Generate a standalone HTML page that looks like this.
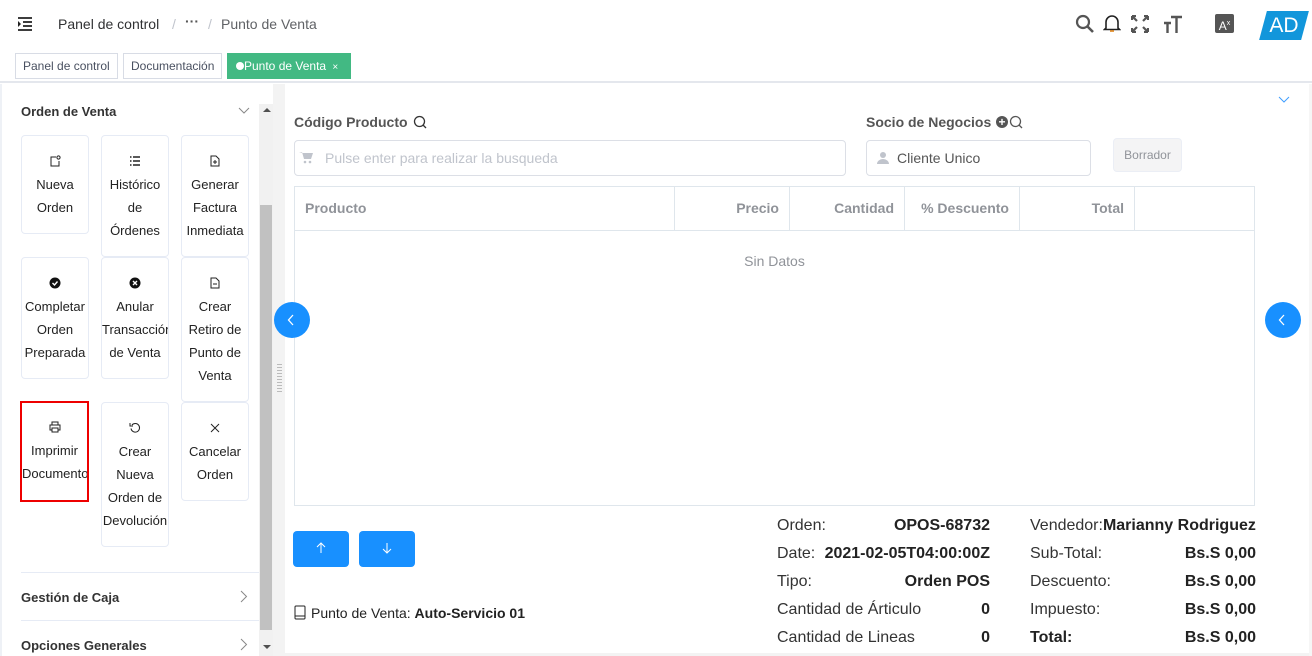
<!DOCTYPE html>
<html><head><meta charset="utf-8"><style>
*{box-sizing:border-box;margin:0;padding:0}
body{width:1312px;height:656px;overflow:hidden;background:#fff;font-family:"Liberation Sans",sans-serif;position:relative;color:#303133}
.a{position:absolute}
.hdr{left:0;top:0;width:1312px;height:48px;background:#fff;box-shadow:0 1px 4px rgba(0,21,41,.08)}
.tab{top:53px;height:26px;border:1px solid #d8dce5;font-size:12px;color:#495060;line-height:24px;padding:0 7px;background:#fff}
.card{border:1px solid #e6ebf5;border-radius:4px;text-align:center;font-size:13px;line-height:23px;color:#222;padding-top:19px;overflow:hidden;white-space:nowrap}
.card svg{display:block;margin:0 auto 6px}
.lbl{font-size:14px;font-weight:bold;color:#555}
.th{top:186px;height:45px;border-right:1px solid #dfe6ec;font-size:14px;font-weight:bold;color:#909399;line-height:44px;padding:0 10px}
.s{font-size:16px;color:#333;height:28px;line-height:28px}
.s b{color:#222}
.circ{width:36px;height:36px;border-radius:50%;background:#1890ff}
.bb{width:56px;height:36px;border-radius:4px;background:#1890ff}
</style></head><body>
<div class="a hdr"></div>
<svg class="a" style="left:17px;top:16px" width="16" height="16" viewBox="0 0 16 16"><path d="M1 2h14M6 6h9M6 10h9M1 14h14" stroke="#222" stroke-width="1.8"/><path d="M1 5l3 3-3 3z" fill="#222"/></svg>
<div class="a" style="left:58px;top:16px;font-size:14px;color:#303133">Panel de control</div>
<div class="a" style="left:172px;top:16px;font-size:14px;color:#c0c4cc">/</div>
<div class="a" style="left:185px;top:13px;font-size:14px;color:#555;font-weight:bold">···</div>
<div class="a" style="left:208px;top:16px;font-size:14px;color:#c0c4cc">/</div>
<div class="a" style="left:221px;top:16px;font-size:14px;color:#606266">Punto de Venta</div>
<svg class="a" style="left:1075px;top:14px" width="20" height="20" viewBox="0 0 20 20"><circle cx="8" cy="8" r="6" stroke="#555" stroke-width="2.2" fill="none"/><path d="M12.5 12.5L18 18" stroke="#555" stroke-width="2.6"/></svg>
<svg class="a" style="left:1103px;top:13px" width="18" height="20" viewBox="0 0 18 20"><path d="M3 15V9a6 6 0 0112 0v6l1.5 1.5h-15z" stroke="#222" stroke-width="1.6" fill="none"/><path d="M7 18h4" stroke="#e0851a" stroke-width="1.6"/></svg>
<svg class="a" style="left:1131px;top:15px" width="18" height="18" viewBox="0 0 18 18"><path d="M1 1l5 5M1 1h4M1 1v4M17 1l-5 5M17 1h-4M17 1v4M1 17l5-5M1 17h4M1 17v-4M17 17l-5-5M17 17h-4M17 17v-4" stroke="#555" stroke-width="2.2"/></svg>
<svg class="a" style="left:1163px;top:15px" width="20" height="18" viewBox="0 0 20 18"><path d="M8 2h11M13.5 2v16M1 8h7M4.5 8v10" stroke="#555" stroke-width="2.4"/></svg>
<div class="a" style="left:1215px;top:14px;width:19px;height:19px;background:#555;border-radius:2px;color:#fff;font-size:12px;line-height:19px;text-align:center">A<sup style="font-size:7px">x</sup></div>
<div class="a" style="left:1263px;top:11px;width:42px;height:29px;background:#1296db;transform:skewX(-15deg)"></div>
<div class="a" style="left:1264px;top:12px;width:40px;color:#fff;font-size:21px;line-height:27px;text-align:center">AD</div>
<div class="a" style="left:0;top:48px;width:1312px;height:35px;background:#fff;border-bottom:2px solid #e4e7ed"></div>
<div class="a tab" style="left:15px;width:103px">Panel de control</div>
<div class="a tab" style="left:123px;width:99px">Documentación</div>
<div class="a tab" style="left:227px;width:124px;background:#42b983;border-color:#42b983;color:#fff;padding-left:8px"><span style="display:inline-block;width:8px;height:8px;border-radius:50%;background:#fff"></span>Punto de Venta <span style="font-size:10px;margin-left:3px">×</span></div>
<div class="a" style="left:0;top:84px;width:2px;height:572px;background:#eef1f6"></div>
<div class="a" style="left:21px;top:104px;font-size:13px;font-weight:bold;color:#333">Orden de Venta</div>
<svg class="a" style="left:238px;top:107px" width="12" height="8" viewBox="0 0 12 8"><path d="M1 1l5 5 5-5" stroke="#888" fill="none"/></svg>
<div class="a" style="left:259px;top:104px;width:14px;height:552px;background:#f1f1f1"></div>
<div class="a" style="left:260px;top:205px;width:12px;height:425px;background:#c1c1c1"></div>
<div class="a" style="left:263px;top:108px;border:4px solid transparent;border-bottom:4px solid #505050;border-top:0"></div>
<div class="a" style="left:263px;top:645px;border:4px solid transparent;border-top:4px solid #505050;border-bottom:0"></div>
<div class="a" style="left:273px;top:84px;width:12px;height:572px;background:#f3f3f3"></div>
<div class="a" style="left:277px;top:364px;width:5px;height:30px;background:repeating-linear-gradient(#bbb 0 1px,transparent 1px 3px)"></div>

<div class="a card" style="left:21px;top:135px;width:68px;height:99px"><svg width="12" height="12" viewBox="0 0 12 12"><path d="M7 2H2v9h8V6" stroke="#222" fill="none"/><circle cx="9.5" cy="2.5" r="1.6" stroke="#222" fill="none"/></svg>Nueva<br>Orden</div>
<div class="a card" style="left:101px;top:135px;width:68px;height:122px"><svg width="12" height="12" viewBox="0 0 12 12"><path d="M1 2h1.5M4 2h7M1 6h1.5M4 6h7M1 10h1.5M4 10h7" stroke="#222" stroke-width="1.6"/></svg>Histórico<br>de<br>Órdenes</div>
<div class="a card" style="left:181px;top:135px;width:68px;height:122px"><svg width="12" height="12" viewBox="0 0 12 12"><path d="M2 1h5l3 3v7H2z" stroke="#222" fill="none"/><path d="M6 5v4M4 7h4" stroke="#222"/></svg>Generar<br>Factura<br>Inmediata</div>
<div class="a card" style="left:21px;top:257px;width:68px;height:122px"><svg width="12" height="12" viewBox="0 0 12 12"><circle cx="6" cy="6" r="5.5" fill="#111"/><path d="M3.5 6l2 2 3-3.5" stroke="#fff" stroke-width="1.4" fill="none"/></svg>Completar<br>Orden<br>Preparada</div>
<div class="a card" style="left:101px;top:257px;width:68px;height:122px"><svg width="12" height="12" viewBox="0 0 12 12"><circle cx="6" cy="6" r="5.5" fill="#111"/><path d="M4 4l4 4M8 4l-4 4" stroke="#fff" stroke-width="1.4"/></svg>Anular<br>Transacción<br>de Venta</div>
<div class="a card" style="left:181px;top:257px;width:68px;height:145px"><svg width="12" height="12" viewBox="0 0 12 12"><path d="M2 1h5l3 3v7H2z" stroke="#222" fill="none"/><path d="M4 7h4" stroke="#222"/></svg>Crear<br>Retiro de<br>Punto de<br>Venta</div>
<div class="a card" style="left:20px;top:401px;width:69px;height:101px;border:2px solid #e00;border-radius:0;padding-top:18px"><svg width="12" height="12" viewBox="0 0 12 12"><path d="M3 4V1h6v3M3 9H1V4h10v5H9M3 7h6v4H3z" stroke="#222" fill="none"/></svg>Imprimir<br>Documento</div>
<div class="a card" style="left:101px;top:402px;width:68px;height:145px"><svg width="12" height="12" viewBox="0 0 12 12"><path d="M3 3a4.3 4.3 0 11-1 3.5" stroke="#222" fill="none"/><path d="M1 1v3h3" stroke="#222" fill="none"/></svg>Crear<br>Nueva<br>Orden de<br>Devolución</div>
<div class="a card" style="left:181px;top:402px;width:68px;height:99px"><svg width="12" height="12" viewBox="0 0 12 12"><path d="M2 2l8 8M10 2l-8 8" stroke="#222"/></svg>Cancelar<br>Orden</div>

<div class="a" style="left:21px;top:572px;width:238px;height:1px;background:#e6ebf5"></div>
<div class="a" style="left:21px;top:590px;font-size:13px;font-weight:bold;color:#333">Gestión de Caja</div>
<svg class="a" style="left:240px;top:590px" width="8" height="13" viewBox="0 0 8 13"><path d="M1 1l5.5 5.5L1 12" stroke="#888" fill="none"/></svg>
<div class="a" style="left:21px;top:620px;width:238px;height:1px;background:#e6ebf5"></div>
<div class="a" style="left:21px;top:638px;font-size:13px;font-weight:bold;color:#333">Opciones Generales</div>
<svg class="a" style="left:240px;top:638px" width="8" height="13" viewBox="0 0 8 13"><path d="M1 1l5.5 5.5L1 12" stroke="#888" fill="none"/></svg>

<div class="a lbl" style="left:294px;top:114px">Código Producto</div>
<svg class="a" style="left:413px;top:115px" width="14" height="14" viewBox="0 0 14 14"><circle cx="6.5" cy="6.5" r="5" stroke="#333" stroke-width="1.3" fill="none"/><path d="M10 10l3 3" stroke="#333" stroke-width="1.3"/></svg>
<div class="a" style="left:294px;top:140px;width:552px;height:36px;border:1px solid #dcdfe6;border-radius:4px"></div>
<svg class="a" style="left:299px;top:151px" width="14" height="13" viewBox="0 0 14 13"><path d="M0 1h3l2 7h7l2-6H4" fill="#c0c4cc"/><circle cx="6" cy="11" r="1.3" fill="#c0c4cc"/><circle cx="11" cy="11" r="1.3" fill="#c0c4cc"/></svg>
<div class="a" style="left:325px;top:150px;font-size:14px;color:#c0c4cc">Pulse enter para realizar la busqueda</div>
<div class="a lbl" style="left:866px;top:114px">Socio de Negocios</div>
<div class="a" style="left:996px;top:116px;width:12px;height:12px;border-radius:50%;background:#555;color:#fff;font-size:12px;line-height:12px;text-align:center;font-weight:bold">+</div>
<svg class="a" style="left:1009px;top:115px" width="14" height="14" viewBox="0 0 14 14"><circle cx="6.5" cy="6.5" r="5" stroke="#555" stroke-width="1.3" fill="none"/><path d="M10 10l3 3" stroke="#555" stroke-width="1.3"/></svg>
<div class="a" style="left:866px;top:140px;width:225px;height:36px;border:1px solid #dcdfe6;border-radius:4px"></div>
<svg class="a" style="left:877px;top:151px" width="12" height="13" viewBox="0 0 12 13"><circle cx="6" cy="4" r="3" fill="#c0c4cc"/><path d="M0 13a6 5 0 0112 0z" fill="#c0c4cc"/></svg>
<div class="a" style="left:897px;top:150px;font-size:14px;color:#555">Cliente Unico</div>
<div class="a" style="left:1113px;top:138px;width:69px;height:34px;border:1px solid #ebeef5;border-radius:4px;background:#f4f4f5;font-size:12px;color:#909399;line-height:32px;text-align:center">Borrador</div>

<div class="a" style="left:294px;top:186px;width:961px;height:320px;border:1px solid #dfe6ec"></div>
<div class="a" style="left:294px;top:230px;width:961px;height:1px;background:#dfe6ec"></div>
<div class="a th" style="left:295px;width:380px">Producto</div>
<div class="a th" style="left:675px;width:115px;text-align:right">Precio</div>
<div class="a th" style="left:790px;width:115px;text-align:right">Cantidad</div>
<div class="a th" style="left:905px;width:115px;text-align:right">% Descuento</div>
<div class="a th" style="left:1020px;width:115px;text-align:right">Total</div>
<div class="a" style="left:294px;top:253px;width:961px;text-align:center;font-size:14px;color:#909399">Sin Datos</div>

<div class="a circ" style="left:274px;top:302px"></div>
<div class="a circ" style="left:1265px;top:302px"></div>
<svg class="a" style="left:287px;top:314px" width="8" height="12" viewBox="0 0 8 12"><path d="M6 1L1.5 6 6 11" stroke="#fff" stroke-width="1.3" fill="none"/></svg>
<svg class="a" style="left:1278px;top:314px" width="8" height="12" viewBox="0 0 8 12"><path d="M6 1L1.5 6 6 11" stroke="#fff" stroke-width="1.3" fill="none"/></svg>
<svg class="a" style="left:1278px;top:96px" width="12" height="8" viewBox="0 0 12 8"><path d="M1 1l5 5 5-5" stroke="#409eff" fill="none"/></svg>

<div class="a bb" style="left:293px;top:531px"></div>
<div class="a bb" style="left:359px;top:531px"></div>
<svg class="a" style="left:316px;top:542px" width="10" height="12" viewBox="0 0 10 12"><path d="M5 11V1M1 5l4-4 4 4" stroke="#fff" fill="none"/></svg>
<svg class="a" style="left:382px;top:542px" width="10" height="12" viewBox="0 0 10 12"><path d="M5 1v10M1 7l4 4 4-4" stroke="#fff" fill="none"/></svg>
<svg class="a" style="left:294px;top:605px" width="12" height="15" viewBox="0 0 12 15"><rect x="1" y="1" width="10" height="13" rx="1" stroke="#222" fill="none"/><path d="M1 11h10" stroke="#222"/></svg>
<div class="a" style="left:311px;top:605px;font-size:14px;color:#222">Punto de Venta: <b>Auto-Servicio 01</b></div>

<div class="a s" style="left:777px;top:512px;width:213px">Orden:<b style="float:right">OPOS-68732</b></div>
<div class="a s" style="left:777px;top:540px;width:213px">Date:<b style="float:right">2021-02-05T04:00:00Z</b></div>
<div class="a s" style="left:777px;top:568px;width:213px">Tipo:<b style="float:right">Orden POS</b></div>
<div class="a s" style="left:777px;top:596px;width:213px">Cantidad de Árticulo<b style="float:right">0</b></div>
<div class="a s" style="left:777px;top:624px;width:213px">Cantidad de Lineas<b style="float:right">0</b></div>
<div class="a s" style="left:1030px;top:512px;width:226px">Vendedor:<b>Marianny Rodriguez</b></div>
<div class="a s" style="left:1030px;top:540px;width:226px">Sub-Total:<b style="float:right">Bs.S 0,00</b></div>
<div class="a s" style="left:1030px;top:568px;width:226px">Descuento:<b style="float:right">Bs.S 0,00</b></div>
<div class="a s" style="left:1030px;top:596px;width:226px">Impuesto:<b style="float:right">Bs.S 0,00</b></div>
<div class="a s" style="left:1030px;top:624px;width:226px"><b>Total:</b><b style="float:right">Bs.S 0,00</b></div>
<div class="a" style="left:285px;top:653px;width:1027px;height:3px;background:#f3f3f3"></div>
<div class="a" style="left:1309px;top:84px;width:3px;height:572px;background:#f6f6f6"></div>
</body></html>
